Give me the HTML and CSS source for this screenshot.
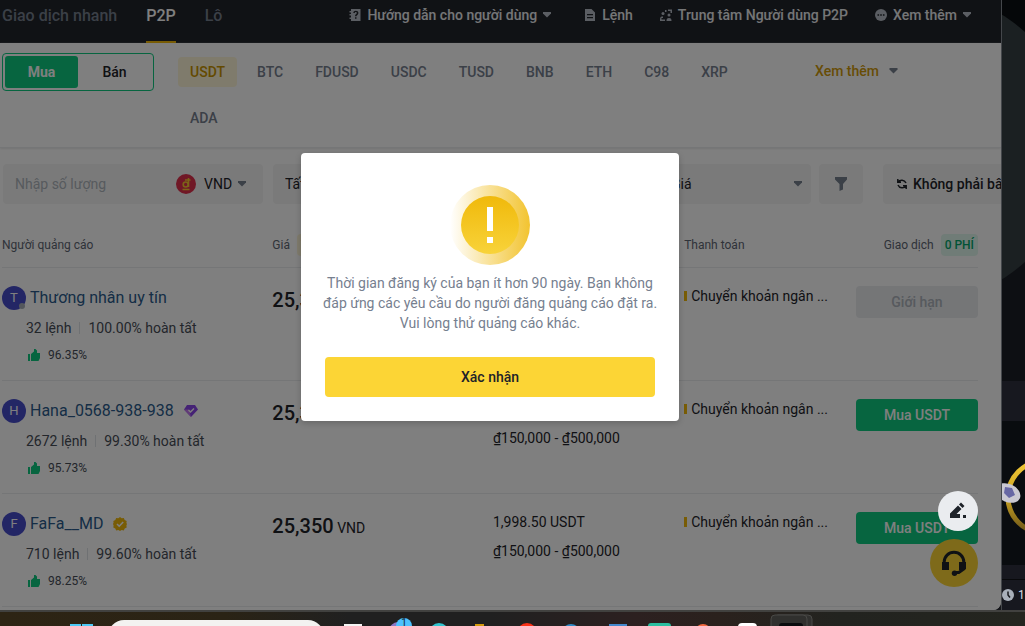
FILE: index.html
```html
<!DOCTYPE html>
<html lang="vi">
<head>
<meta charset="utf-8">
<meta name="viewport" content="width=device-width, initial-scale=1">
<title>P2P</title>
<link rel="stylesheet" href="styles.css">
</head>
<body>
<svg class="defs" width="0" height="0" aria-hidden="true">
  <symbol id="caret" viewBox="0 0 8 6"><path d="M0 0h8v1.500L4 5.500 0 1.500z" fill="currentColor"/></symbol>
  <symbol id="thumb" viewBox="0 0 12 12"><path d="M0 5h2v7H0zM3 5l3-2.500V0h1.500L9 1.500V4h3v5l-1.500 3H3z" fill="currentColor"/></symbol>
</svg>
<div class="desktop">
  <div class="window">
    <header class="topbar">
      <nav class="tabs">
        <a href="#">Giao dịch nhanh</a>
        <a href="#" class="active">P2P</a>
        <a href="#">Lô</a>
      </nav>
      <nav class="links">
        <a href="#"><svg width="12" height="14" viewBox="0 0 12 14"><path fill="currentColor" fill-rule="evenodd" d="M2 1h9.500v12H2v-2H.500V9.500H2v-2H.500V6H2V4.500H.500V3H2zM4.300 5h1.500c0-1.500 2-1.300 2 0 0 1-1.800 1.200-1.800 3.200h1.500c0-1.200 1.900-1.500 1.900-3.300C9.400 2 4.300 2 4.300 5zM6 9.300v1.500h1.500V9.300z"/></svg>Hướng dẫn cho người dùng<svg class="caret" width="8" height="6"><use href="#caret"/></svg></a>
        <a href="#" class="after-menu"><svg width="12" height="14" viewBox="0 0 12 14"><path fill="currentColor" fill-rule="evenodd" d="M1 1h6.500L11 4.500V13H1zM3 6v1.200h6V6zm0 3v1.200h6V9z"/></svg>Lệnh</a>
        <a href="#"><svg width="12" height="14" viewBox="0 0 12 14"><g fill="currentColor"><circle cx="3" cy="5.500" r="1.500"/><path d="M0 13v-1.500C0 9 1 8.500 3 8.500V10H1.500v1.500H5V13z"/><circle cx="9" cy="7" r="1.500"/><path d="M6.500 13c0-2 .500-3 2.500-3s2.500 1 2.500 3zM8 1.500h4V5h-1.500V3H8zM5 2h1.500v2H5z"/></g></svg>Trung tâm Người dùng P2P</a>
        <a href="#"><svg width="12" height="12" viewBox="0 0 12 12"><circle cx="6" cy="6" r="6" fill="currentColor"/><path d="M2.500 5.200h1.600v1.600H2.500zm2.700 0h1.600v1.600H5.200zm2.700 0h1.600v1.600H7.900z" fill="#1e2329"/></svg>Xem thêm<svg class="caret" width="8" height="6"><use href="#caret"/></svg></a>
      </nav>
    </header>

    <section class="coins">
      <div class="side-toggle"><button class="on">Mua</button><button>Bán</button></div>
      <div class="coin-list">
        <button class="on">USDT</button><button>BTC</button><button>FDUSD</button><button>USDC</button><button>TUSD</button><button>BNB</button><button>ETH</button><button>C98</button><button>XRP</button><button>ADA</button>
      </div>
      <button class="more">Xem thêm<svg width="9" height="6"><use href="#caret"/></svg></button>
    </section>

    <section class="filters">
      <div class="field amount">
        <input type="text" placeholder="Nhập số lượng" aria-label="Nhập số lượng">
        <svg width="20" height="20" viewBox="0 0 20 20"><circle cx="10" cy="10" r="10" fill="#e0304d"/><path d="M12.500 4v9M9 6h5.500M6.500 15.500h7" stroke="#f8c630" stroke-width="1.600" fill="none"/><circle cx="9.700" cy="10.500" r="2.500" stroke="#f8c630" stroke-width="1.600" fill="none"/></svg>
        <select aria-label="Tiền tệ"><option>VND</option></select>
        <svg class="arrow" width="8" height="6"><use href="#caret"/></svg>
      </div>
      <div class="field payment"><select aria-label="Phương thức thanh toán"><option>Tất cả</option></select></div>
      <div class="field sort"><select aria-label="Sắp xếp"><option>Giá</option></select><svg class="arrow" width="8" height="6"><use href="#caret"/></svg></div>
      <button class="field funnel" aria-label="Bộ lọc"><svg width="12" height="14" viewBox="0 0 12 14"><path d="M0 0h12v2.500L8 7v5.500L4.500 14V7L0 2.500z" fill="#76808f"/></svg></button>
      <button class="field refresh"><svg width="10" height="10" viewBox="0 0 10 10" fill="none" stroke="currentColor" stroke-width="1.500"><path d="M.800 0v3.200H4M1 3.200C3 .200 7.500.500 9 4M9.200 10V6.800H6M9 6.800C7 9.800 2.500 9.500 1 6"/></svg>Không phải bây giờ</button>
    </section>

    <table class="offers">
      <colgroup><col class="c-user"><col class="c-price"><col class="c-limit"><col class="c-pay"><col class="c-trade"></colgroup>
      <thead><tr>
        <th>Người quảng cáo</th><th>Giá <span class="tag gold">Thấp</span></th><th></th><th>Thanh toán</th><th class="right">Giao dịch <span class="tag green">0 PHÍ</span></th>
      </tr></thead>
      <tbody>
        <tr>
          <td><div class="user"><span class="avatar away">T</span><a href="#">Thương nhân uy tín</a></div>
            <div class="stats"><span>32 lệnh</span><span>100.00% hoàn tất</span></div>
            <div class="rate"><svg width="12" height="12"><use href="#thumb"/></svg>96.35%</div></td>
          <td class="price"><b>25,350</b></td>
          <td class="limit"></td>
          <td class="pay"><span>Chuyển khoản ngân ...</span></td>
          <td><button class="buy" disabled>Giới hạn</button></td>
        </tr>
        <tr>
          <td><div class="user"><span class="avatar">H</span><a href="#">Hana_0568-938-938</a><svg class="badge" width="14" height="12" viewBox="0 0 14 12"><path d="M3 0h8l3 4.500L7 12 0 4.500z" fill="#8b45ea"/><path d="M0 4.500h5L7 12z" fill="#c477ee"/><path d="M4.500 5l2 2 3.500-3.500" stroke="#fff" stroke-width="1.400" fill="none"/></svg></div>
            <div class="stats"><span>2672 lệnh</span><span>99.30% hoàn tất</span></div>
            <div class="rate"><svg width="12" height="12"><use href="#thumb"/></svg>95.73%</div></td>
          <td class="price"><b>25,350</b></td>
          <td class="limit"><p>&nbsp;</p><p>₫150,000 - ₫500,000</p></td>
          <td class="pay"><span>Chuyển khoản ngân ...</span></td>
          <td><button class="buy">Mua USDT</button></td>
        </tr>
        <tr>
          <td><div class="user"><span class="avatar">F</span><a href="#">FaFa__MD</a><svg class="badge" width="14" height="14" viewBox="0 0 14 14"><path d="M7 0l1.700 1.300 2.100-.300.900 2 2 .900-.300 2.100L14 7l-.600 1.500.300 2-2 .900-.900 2-2.100-.300L7 14l-1.700-.900-2.100.300-.900-2-2-.900.300-2L0 7l.600-1.500-.300-1.600 2-.900.900-2 2.100.300z" fill="#f0b90b"/><path d="M4 7l2.200 2.200L10.200 5" stroke="#fff" stroke-width="1.600" fill="none"/></svg></div>
            <div class="stats"><span>710 lệnh</span><span>99.60% hoàn tất</span></div>
            <div class="rate"><svg width="12" height="12"><use href="#thumb"/></svg>98.25%</div></td>
          <td class="price"><b>25,350</b> VND</td>
          <td class="limit"><p>1,998.50 USDT</p><p>₫150,000 - ₫500,000</p></td>
          <td class="pay"><span>Chuyển khoản ngân ...</span></td>
          <td><button class="buy">Mua USDT</button></td>
        </tr>
      </tbody>
    </table>

    <button class="support" aria-label="Hỗ trợ"><svg width="26" height="26" viewBox="0 0 26 26"><path d="M3.200 15v-3a9.800 9.800 0 0 1 19.600 0v7l-5 3.500H14" fill="none" stroke="#1e2329" stroke-width="3"/><path d="M1 12h7v8H1zM18 12h7v7l-3 1h-4z" fill="#1e2329"/><circle cx="13.500" cy="23.300" r="2.700" fill="#1e2329"/></svg></button>

    <div class="overlay">
      <div class="dialog" role="dialog" aria-modal="true" aria-labelledby="notice">
        <svg width="80" height="80" viewBox="0 0 80 80">
          <defs>
            <linearGradient id="halo"><stop offset="0" stop-color="#f0b90b" stop-opacity="0"/><stop offset="1" stop-color="#f0b90b" stop-opacity=".85"/></linearGradient>
            <linearGradient id="disc" x2="0" y2="1"><stop offset="0" stop-color="#f0b90b"/><stop offset="1" stop-color="#f8d33a"/></linearGradient>
          </defs>
          <circle cx="40" cy="40" r="40" fill="url(#halo)"/><circle cx="40" cy="40" r="29" fill="url(#disc)"/>
          <path d="M37 22h6v24h-6zM37 52h6v6h-6z" fill="#fff"/>
        </svg>
        <p id="notice">Thời gian đăng ký của bạn ít hơn 90 ngày. Bạn không<br>đáp ứng các yêu cầu do người đăng quảng cáo đặt ra.<br>Vui lòng thử quảng cáo khác.</p>
        <button>Xác nhận</button>
      </div>
    </div>
    <button class="edit" aria-label="Chỉnh sửa"><svg width="18" height="18" viewBox="0 0 18 18"><path d="M1 11.500l8-8 3.500 3.500-5 5H11v4H1zM10 2.500L12 .500 15.500 4l-2 2zM14 13h3v3h-3z" fill="#1e2329"/></svg></button>
  </div>

  <aside class="behind">
    <svg class="scene" viewBox="0 0 24 381" preserveAspectRatio="xMinYMin slice"><path d="M0 0h24v381H0z" fill="#0d0f13"/><path d="M0 0h24v40H0z" fill="#050709"/><circle cx="-81" cy="147" r="155" fill="#1b2022"/></svg>
    <div class="strip"></div>
    <svg class="coin" viewBox="0 0 24 144" preserveAspectRatio="xMinYMin slice"><defs><linearGradient id="ring" x2="0" y2="1"><stop offset="0" stop-color="#f3c935"/><stop offset=".5" stop-color="#c9a223"/><stop offset="1" stop-color="#6b5518"/></linearGradient></defs><path d="M0 0h24v144H0z" fill="#090c0f"/><circle cx="42" cy="76" r="36" fill="none" stroke="url(#ring)" stroke-width="5"/><ellipse cx="6" cy="72" rx="13" ry="9" transform="rotate(25 6 72)" fill="#c9c8d2"/><path d="M3 66l7 1 3 7-6 3-5-5z" fill="#6767a4"/></svg>
    <div class="strip small"></div>
    <div class="time"><svg width="12" height="12" viewBox="0 0 12 12"><circle cx="6" cy="6" r="6" fill="#a9b0ba"/><path d="M6 2.500V6l2 2.500" stroke="#17181d" stroke-width="1.500" fill="none"/></svg><span>1</span></div>
  </aside>
</div>

<footer class="taskbar">
  <svg class="start" width="48" height="14"><path d="M10 12h11v2H10zM22 12h11v2H22z" fill="#4cc9f5"/></svg>
  <div class="search"></div>
  <svg width="44" height="14"><path d="M15 12h18v2H15z" fill="#f4f4f4"/></svg>
  <svg width="44" height="14"><circle cx="25" cy="19" r="9" fill="#8a76c4"/><circle cx="31" cy="14" r="8" fill="#4cc2ff"/><text x="31" y="14" text-anchor="middle" class="count">1</text></svg>
  <svg width="44" height="14"><circle cx="22" cy="21" r="10" fill="#31c5d0"/></svg>
  <svg width="44" height="14"><path d="M14 12h9v2h-9z" fill="#d39a0b"/></svg>
  <svg width="44" height="14"><circle cx="22" cy="21" r="10" fill="#fa3218"/></svg>
  <svg width="44" height="14"><circle cx="22" cy="21" r="9" fill="#2f8bc7"/></svg>
  <svg width="44" height="14"><path d="M16 12h18v2H16z" fill="#4388cd"/></svg>
  <svg width="44" height="14"><rect x="11" y="11" width="23" height="10" rx="3" fill="#2abfa0"/></svg>
  <svg width="44" height="14"><circle cx="22" cy="20" r="8" fill="#f4693f"/></svg>
  <svg width="44" height="14"><rect x="13" y="11" width="19" height="10" rx="4" fill="#fff"/></svg>
  <svg width="44" height="14"><rect x="5" y="3" width="38" height="20" rx="4" fill="#31312f" stroke="#494946"/><rect x="2" y="3" width="36" height="20" rx="4" fill="#30302e" stroke="#494946"/><rect x="10" y="11" width="24" height="10" rx="3" fill="#0a0c0e"/></svg>
</footer>
</body>
</html>
```
FILE: styles.css
```css
* { box-sizing: border-box; }
body {
  margin: 0;
  height: 100vh;
  display: flex;
  flex-direction: column;
  overflow: hidden;
  background: #15161a;
  color: #1e2329;
  font: 14px/20px Roboto, "Noto Sans", sans-serif;
}
button, input, select { font: inherit; color: inherit; border: 0; background: none; padding: 0; margin: 0; }
button { cursor: pointer; }
a { color: inherit; text-decoration: none; }
p { margin: 0; }
svg { flex: none; display: block; }
.defs { position: absolute; }

.desktop { flex: 1; min-height: 0; display: flex; }
.window {
  position: relative;
  flex: 1;
  min-width: 0;
  overflow: hidden;
  background: #fff;
  border-bottom-right-radius: 8px;
}

.topbar { height: 43px; display: flex; justify-content: space-between; background: #21242b; padding: 0 30px 0 2px; }
.tabs { display: flex; gap: 29px; font-size: 16px; font-weight: 500; color: #76808f; }
.tabs a { padding-top: 6px; }
.tabs .active { color: #fff; border-bottom: 2px solid #f0b90b; }
.links { display: flex; gap: 27px; padding-top: 5px; color: #eaecef; font-weight: 500; }
.links a { display: flex; align-items: center; gap: 6px; height: 20px; }
.links svg { color: #b7bdc6; }
.links .after-menu { margin-left: 6px; }

.coins { display: flex; align-items: flex-start; padding: 10px 103px 14px 2px; border-bottom: 1px solid #eaecef; box-shadow: 0 1px 2px #e8e8e8; height: 105px; font-weight: 500; }
.side-toggle { display: grid; grid-template-columns: 1fr 1fr; width: 152px; height: 38px; padding: 2px; border: 1px solid #0ecb81; border-radius: 4px; margin-right: 24px; }
.side-toggle .on { background: #0ecb81; color: #fff; border-radius: 3px; font-weight: 700; }
.coin-list { flex: 1; display: flex; flex-wrap: wrap; gap: 16px 8px; padding-top: 4px; color: #76808f; }
.coin-list button { height: 30px; padding: 0 12px; border-radius: 4px; }
.coin-list .on { background: #fef6d8; color: #c99400; }
.more { display: flex; align-items: center; gap: 10px; color: #d09a0b; height: 36px; margin-left: 36px; }
.more svg { color: #76808f; }

.filters { display: flex; padding: 16px 0 0 3px; }
.field { height: 40px; background: #f5f5f5; border-radius: 4px; display: flex; align-items: center; margin-right: 10px; padding: 0 12px; }
.field select { appearance: none; flex: 1; min-width: 0; }
.arrow { color: #76808f; }
.amount { flex: 0 0 260px; min-width: 0; padding-right: 17px; }
.amount input { flex: 1; min-width: 0; width: 0; }
.amount input::placeholder { color: #aeb4bc; opacity: 1; }
.amount .arrow { margin-left: 2px; }
.amount select { flex: 0 0 32px; margin-left: 8px; }
.payment { flex: 1; min-width: 0; }
.sort { flex: 0 0 152px; margin-right: 8px; padding-right: 9px; }
.funnel { flex: 0 0 44px; justify-content: center; margin-right: 20px; }
.refresh { flex: 0 0 118px; margin-right: 0; padding: 0 0 0 14px; gap: 6px; white-space: nowrap; overflow: hidden; border-radius: 4px 0 0 4px; font-weight: 500; }

.offers { table-layout: fixed; width: calc(100% - 25px); margin: 20px 0 0 2px; border-collapse: collapse; }
.c-user { width: 27.7%; }
.c-price { width: 22.6%; }
.c-limit { width: 19.6%; }
.c-pay { width: 17.6%; }
th, td { padding: 0; text-align: left; vertical-align: top; white-space: nowrap; border-bottom: 1px solid #eaecef; }
th { height: 43px; padding-top: 10px; font-size: 12px; line-height: 22px; font-weight: 400; color: #5e6673; }
.right { text-align: right; }
.tag { display: inline-block; padding: 0 4px; margin-left: 4px; border-radius: 4px; line-height: 22px; }
.gold { background: #fef6d8; }
.green { background: #e1f8ee; color: #03a66d; font-weight: 500; }
td { height: 113px; padding-top: 18px; }
.user { display: flex; align-items: center; gap: 4px; height: 24px; font-size: 16px; color: #2a5b8c; }
.avatar { position: relative; width: 24px; height: 24px; border-radius: 50%; background: #474dcb; color: #fff; font-size: 13px; line-height: 24px; text-align: center; }
.away::after { content: ""; position: absolute; right: 1px; bottom: 1px; width: 6px; height: 6px; border-radius: 50%; background: #a8afb8; }
.badge { margin-left: 6px; }
.stats { display: flex; padding: 8px 0 0 24px; color: #474d57; }
.stats span + span { display: flex; align-items: center; }
.stats span + span::before { content: ""; width: 1px; height: 12px; margin: 0 8px; background: #dfe2e6; }
.rate { display: flex; align-items: center; gap: 8px; padding: 7px 0 0 26px; font-size: 12px; color: #474d57; }
.rate svg { color: #0ecb81; }
.price { padding-top: 22px; }
.price b { font-size: 20px; font-weight: 500; }
.limit p { margin-bottom: 9px; }
.pay span { display: block; border-left: 3px solid #f0b90b; padding-left: 4px; line-height: 10px; margin-top: 5px; }
.buy { width: 100%; height: 32px; border-radius: 4px; background: #0ecb81; color: #fff; font-weight: 500; }
.buy:disabled { background: #eaecef; color: #aeb4bc; }

.support, .edit { position: absolute; right: 23px; display: grid; place-items: center; border-radius: 50%; }
.support { bottom: 23px; width: 48px; height: 48px; background: #fcd535; }
.edit { bottom: 79px; width: 40px; height: 40px; background: #eaecef; }

.overlay { position: absolute; inset: 0; display: grid; place-items: center; padding: 0 21px 36px 0; background: rgba(0, 0, 0, .5); }
.dialog { display: flex; flex-direction: column; align-items: center; width: 378px; padding: 32px 24px 24px; background: #fff; border-radius: 4px; box-shadow: 0 2px 6px rgba(0, 0, 0, .2); }
.dialog p { margin: 8px 0 24px; text-align: center; white-space: nowrap; color: #76808f; }
.dialog button { width: 100%; height: 40px; border-radius: 4px; background: #fcd535; font-weight: 500; }

.behind { flex: 0 0 24px; display: flex; flex-direction: column; overflow: hidden; border-left: 1px solid #44474b; }
.scene { width: 24px; flex: 381 1 0; min-height: 0; }
.coin { width: 24px; flex: 144 1 0; min-height: 0; }
.strip { height: 40px; background: #17181f; }
.small { height: 15px; border-bottom: 1px solid #08090b; }
.time { display: flex; align-items: center; gap: 4px; height: 30px; background: #17181f; color: #d5dae2; font-size: 12px; }

.taskbar { display: flex; height: 16px; padding-left: 60px; overflow: hidden; border-top: 2px solid #41413f; background: linear-gradient(90deg, #2d2414, #2a2315 22%, #202020 34%, #202020 48%, #2c2020 62%, #2a211d 70%, #22231f 82%, #24251f); }
.search { flex: 0 0 216px; height: 32px; margin: 8px 5px 0 0; border-radius: 16px; background: #f3f2f0; }
.count { font-size: 10px; fill: #10222e; }
```
